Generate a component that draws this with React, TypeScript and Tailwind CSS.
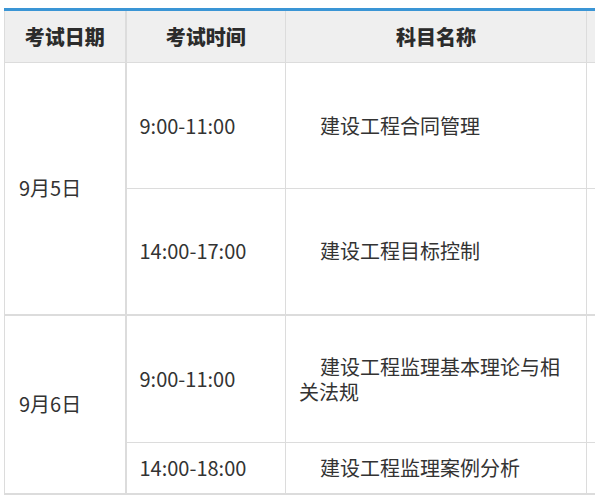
import React from 'react'

const font = { fontFamily: '"Noto Sans CJK SC", "Noto Sans", sans-serif' }

const App = () => {
  return (
    <div className="w-[595px] h-[500px] overflow-hidden bg-white pt-[8px] pl-[4px]" style={font}>
      <table className="table-fixed border-collapse w-[700px] text-[#333] text-[20px]">
        <colgroup>
          <col className="w-[121px]" />
          <col className="w-[160px]" />
          <col className="w-[301px]" />
          <col className="w-[118px]" />
        </colgroup>
        <thead>
          <tr className="h-[53px] bg-[#efefef] border-t-[3px] border-t-[#3a95d5]">
            <th className="border-l border-r-2 border-b border-[#dcdcdc] font-black text-[20px] text-center text-[#2b2b2b]">考试日期</th>
            <th className="border-r border-b border-[#dcdcdc] font-black text-[20px] text-center text-[#2b2b2b]">考试时间</th>
            <th className="border-r border-b border-[#dcdcdc] font-black text-[20px] text-center text-[#2b2b2b]">科目名称</th>
            <th className="border-b border-[#dcdcdc]"></th>
          </tr>
        </thead>
        <tbody>
          <tr className="h-[126px]">
            <td rowSpan={2} className="border-l border-r-2 border-b-2 border-[#dcdcdc] pl-[14px] align-middle">9月5日</td>
            <td className="border-r border-b border-[#dcdcdc] pl-[13px]">9:00-11:00</td>
            <td className="border-r border-b border-[#dcdcdc] pl-[13px] pr-[12px] indent-[21px]">建设工程合同管理</td>
            <td className="border-b border-[#dcdcdc]"></td>
          </tr>
          <tr className="h-[126px]">
            <td className="border-r border-b-2 border-[#dcdcdc] pl-[13px]">14:00-17:00</td>
            <td className="border-r border-b-2 border-[#dcdcdc] pl-[13px] pr-[12px] indent-[21px]">建设工程目标控制</td>
            <td className="border-b-2 border-[#dcdcdc]"></td>
          </tr>
          <tr className="h-[128px]">
            <td rowSpan={2} className="border-l border-r-2 border-b-2 border-[#dcdcdc] pl-[14px] align-middle">9月6日</td>
            <td className="border-r border-b border-[#dcdcdc] pl-[13px]">9:00-11:00</td>
            <td className="border-r border-b border-[#dcdcdc] pl-[13px] pr-[12px] indent-[21px] leading-[25px]">建设工程监理基本理论与相关法规</td>
            <td className="border-b border-[#dcdcdc]"></td>
          </tr>
          <tr className="h-[51px]">
            <td className="border-r border-b-2 border-[#dcdcdc] pl-[13px]">14:00-18:00</td>
            <td className="border-r border-b-2 border-[#dcdcdc] pl-[13px] pr-[12px] indent-[21px]">建设工程监理案例分析</td>
            <td className="border-b-2 border-[#dcdcdc]"></td>
          </tr>
        </tbody>
      </table>
    </div>
  )
}

export default App
